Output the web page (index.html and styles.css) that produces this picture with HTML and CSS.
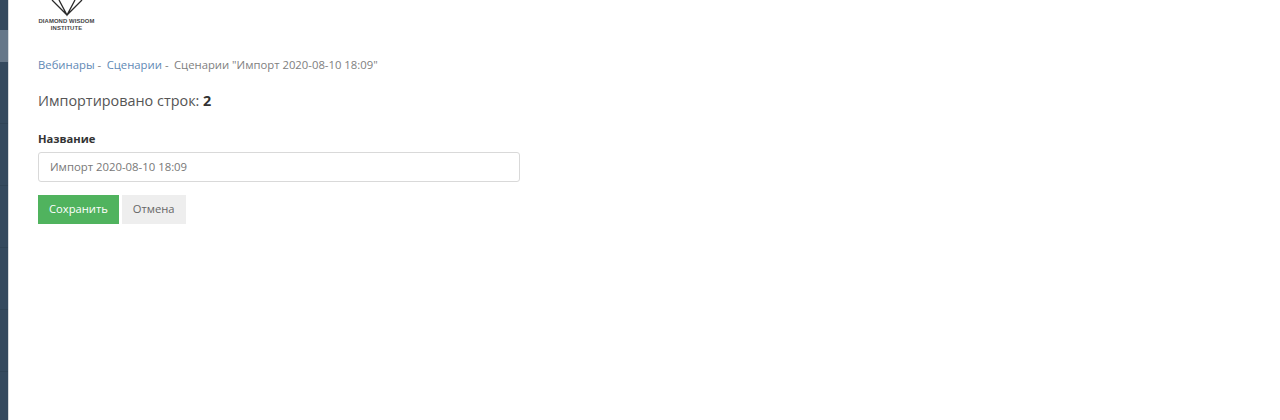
FILE: index.html
```html
<!DOCTYPE html>
<html lang="ru">
<head>
  <meta charset="UTF-8">
  <title>Сценарии</title>
  <link rel="stylesheet" href="styles.css">
</head>
<body>
  <div class="MainFrame">
    <div class="SideBar">
      <div class="sideItem"></div>
      <div class="sideItem active"></div>
      <div class="sideItem"></div>
      <div class="sideItem"></div>
      <div class="sideItem"></div>
      <div class="sideItem"></div>
      <div class="sideItem"></div>
    </div>
    <div class="Content">
      <div class="logo">
        <svg class="logoIcon" width="36" height="17" viewBox="0 0 36 17">
          <path d="M3 0 L18 15 L33 0 M10 0 L18 15 L26 0" fill="none" stroke="#2b2b2b" stroke-width="1.3"/>
        </svg>
        <div class="logoText">DIAMOND WISDOM<br>INSTITUTE</div>
      </div>
      <div class="crumbs">
        <a href="#">Вебинары</a><span class="sep">-</span>
        <a href="#">Сценарии</a><span class="sep">-</span>
        <span class="current">Сценарии "Импорт 2020-08-10 18:09"</span>
      </div>
      <div class="imported">Импортировано строк: <b>2</b></div>
      <form class="form">
        <label class="label" for="name">Название</label>
        <input class="input" id="name" type="text" value="Импорт 2020-08-10 18:09">
        <div class="buttons">
          <button class="btn save" type="submit">Сохранить</button>
          <button class="btn cancel" type="button">Отмена</button>
        </div>
      </form>
    </div>
  </div>
</body>
</html>
```

FILE: styles.css
```css
html, body {
  margin: 0;
  height: 100%;
}

body {
  font-family: "Open Sans", "Noto Sans", sans-serif;
  color: #333;
  background-color: #fff;
  overflow: hidden;
}

.MainFrame {
  display: flex;
  height: 420px;
}

.SideBar {
  width: 8px;
  background-color: #34495e;
  border-right: 1px solid #d5d9dd;
  flex-shrink: 0;
}

.sideItem {
  height: 61px;
  border-bottom: 1px solid #2f4356;
}

.sideItem:first-child {
  height: 30px;
  border-bottom: 0;
}

.sideItem.active {
  height: 32px;
  background-color: #667789;
  border-bottom: 0;
}

.Content {
  padding-left: 29px;
  flex: 1;
}

.logo {
  width: 57px;
  text-align: center;
}

.logoIcon {
  display: block;
  margin: 0 auto;
}

.logoText {
  margin-top: 1px;
  font-family: "Liberation Sans", sans-serif;
  font-size: 5.9px;
  font-weight: bold;
  line-height: 7px;
  color: #444;
  letter-spacing: 0.1px;
}

.crumbs {
  margin-top: 25px;
  font-size: 11.3px;
  line-height: 16px;
  color: #808080;
}

.crumbs a {
  color: #6189b5;
  text-decoration: none;
}

.sep {
  margin-left: 3px;
  margin-right: 2.5px;
}

.imported {
  margin-top: 18px;
  font-size: 14.4px;
  line-height: 20px;
  color: #555;
}

.imported b {
  color: #333;
}

.form {
  margin-top: 20px;
}

.label {
  display: block;
  font-size: 11.2px;
  font-weight: bold;
  line-height: 16px;
  color: #333;
}

.input {
  display: block;
  box-sizing: border-box;
  width: 482px;
  height: 30px;
  margin-top: 5px;
  padding: 0 11px 2px;
  border: 1px solid #d9d9d9;
  border-radius: 3px;
  font-family: inherit;
  font-size: 11.35px;
  color: #777;
}

.buttons {
  display: flex;
  gap: 3px;
  margin-top: 13px;
}

.btn {
  height: 29px;
  padding: 0 11px 2px;
  border: 0;
  font-family: inherit;
  font-size: 11.2px;
}

.save {
  background-color: #50b35e;
  color: #fff;
}

.cancel {
  background-color: #eee;
  color: #666;
}
```
